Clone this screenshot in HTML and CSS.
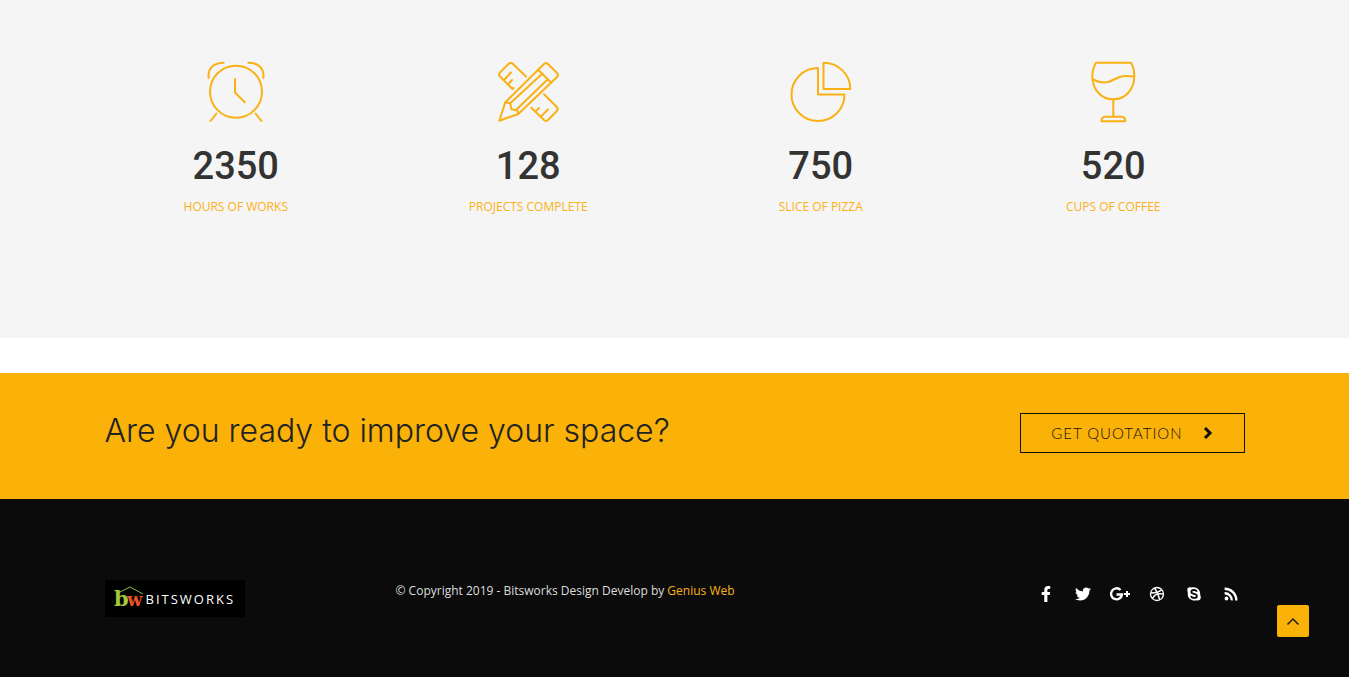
FILE: index.html
```html
<!DOCTYPE html>
<html lang="en">
<head>
    <meta charset="utf-8">
    <meta name="viewport" content="width=device-width, initial-scale=1.0">
    <title>Bitsworks</title>
    <link rel="stylesheet" href="styles.css">
</head>
<body>
    <section class="facts">
        <div class="container facts-row">
            <div class="fact">
                <svg class="fact-icon" viewBox="0 0 64 64" aria-hidden="true">
                    <circle cx="32" cy="31.7" r="26"/>
                    <path d="M31 19v13.5l9.7 9.7M4.7 18C3.5 9 9 2.7 19.7 2.7M59.3 18C60.5 9 55 2.7 44.3 2.7M12.5 53.5l-6 7.5M51.5 53.5l6 7.5"/>
                </svg>
                <div class="fact-number">2350</div>
                <div class="fact-label">HOURS OF WORKS</div>
            </div>
            <div class="fact">
                <svg class="fact-icon" viewBox="0 0 64 64" aria-hidden="true">
                    <path d="M16.5 29L4 16.5Q2.2 14.5 4 12.5L12.5 4Q14.5 2 16.5 3.5L30 16.5M8.5 19.5l6.5-7M13 23.5l3-3.5M16.5 29l1-1"/>
                    <path d="M48 34.3L60.8 47Q62.5 49 60.8 51L52 60Q50 61.7 48 60L35.3 47.7M39.5 51.5l3.5-3.5M45 56.5l7-7"/>
                    <path d="M3.3 60.7L9.3 42.3L47.5 4.5Q49.7 2 52 4L61 13Q63 15 61 17L22.3 54z"/>
                    <path d="M42.3 10L55 22.5M9.3 42.3l5 1 1 6 6 1 1 3.7M14.5 43L46.5 13.5M20.5 49.5L51.5 19.5"/>
                </svg>
                <div class="fact-number">128</div>
                <div class="fact-label">PROJECTS COMPLETE</div>
            </div>
            <div class="fact">
                <svg class="fact-icon" viewBox="0 0 64 64" aria-hidden="true">
                    <path d="M29 8v26.5h26.5A26.5 26.5 0 1 1 29 8z"/>
                    <path d="M34.5 2.7V29h26.8A26.8 26.3 0 0 0 34.5 2.7z"/>
                </svg>
                <div class="fact-number">750</div>
                <div class="fact-label">SLICE OF PIZZA</div>
            </div>
            <div class="fact">
                <svg class="fact-icon" viewBox="0 0 64 64" aria-hidden="true">
                    <path d="M15 2.7H50C52.5 7 53.3 11 53.3 16C53.3 29 45 39.3 32.3 39.3S11.3 29 11.3 16C11.3 11 12.5 7 15 2.7z"/>
                    <path d="M12 19.5C17 22 22 23 27 22C34 20 37 16 44 16C47 16 50 16 53 16.5M32.3 39.3V56.7M24 56.7H41Q44.3 57 44.3 61.3H20.5Q20.5 57 24 56.7z"/>
                </svg>
                <div class="fact-number">520</div>
                <div class="fact-label">CUPS OF COFFEE</div>
            </div>
        </div>
    </section>

    <section class="cta">
        <div class="container cta-row">
            <h2 class="cta-title">Are you ready to improve your space?</h2>
            <button type="button" class="cta-button">
                GET QUOTATION
                <svg class="cta-arrow" viewBox="0 0 10 14" aria-hidden="true"><path d="M2 2l5 5-5 5"/></svg>
            </button>
        </div>
    </section>

    <footer class="footer">
        <div class="container footer-row">
            <div class="footer-brand">
                <a href="#" class="logo">
                    <svg class="logo-mark" viewBox="0 0 30 26" aria-hidden="true">
                        <path class="roof" d="M4 7L16 1l13 7"/>
                        <text class="logo-b" x="0" y="20">b</text>
                        <text class="logo-w" x="13" y="20">w</text>
                    </svg>
                    <span class="logo-name">BITSWORKS</span>
                </a>
            </div>
            <p class="copyright">© Copyright 2019 - Bitsworks Design Develop by <a href="#">Genius Web</a></p>
            <nav class="social">
                <a href="#" aria-label="Facebook">
                    <svg viewBox="-96 0 512 512"><path d="M279.14 288l14.22-92.66h-88.91v-60.13c0-25.35 12.42-50.06 52.24-50.06h40.42V6.26S260.43 0 225.36 0c-73.22 0-121.08 44.38-121.08 124.72v70.62H22.89V288h81.39v224h100.17V288z"/></svg>
                </a>
                <a href="#" aria-label="Twitter">
                    <svg viewBox="0 0 512 512"><path d="M459.37 151.716c.325 4.548.325 9.097.325 13.645 0 138.72-105.583 298.558-298.558 298.558-59.452 0-114.68-17.219-161.137-47.106 8.447.974 16.568 1.299 25.34 1.299 49.055 0 94.213-16.568 130.274-44.832-46.132-.975-84.792-31.188-98.112-72.772 6.498.974 12.995 1.624 19.818 1.624 9.421 0 18.843-1.3 27.614-3.573-48.081-9.747-84.143-51.98-84.143-102.985v-1.299c13.969 7.797 30.214 12.67 47.431 13.319-28.264-18.843-46.781-51.005-46.781-87.391 0-19.492 5.197-37.36 14.294-52.954 51.655 63.675 129.3 105.258 216.365 109.807-1.624-7.797-2.599-15.918-2.599-24.04 0-57.828 46.782-104.934 104.934-104.934 30.213 0 57.502 12.67 76.67 33.137 23.715-4.548 46.456-13.32 66.599-25.34-7.798 24.366-24.366 44.833-46.132 57.827 21.117-2.273 41.584-8.122 60.426-16.243-14.292 20.791-32.161 39.308-52.628 54.253z"/></svg>
                </a>
                <a href="#" aria-label="Google Plus">
                    <svg class="wide" viewBox="0 0 22 16"><path class="line" d="M11.5 4A5.5 5.5 0 1 0 13 8.5H7.5"/><path d="M17 5h2v2h2v2h-2v2h-2V9h-2V7h2z"/></svg>
                </a>
                <a href="#" aria-label="Dribbble">
                    <svg viewBox="0 0 16 16"><path class="thin" d="M8 1.5a6.5 6.5 0 1 0 0 13a6.5 6.5 0 1 0 0-13zM5.5 2C8.5 6 10 10 10.5 14M1.7 7C6.5 7 10.5 6 12.5 3.5M3.5 12.5C5.5 8.5 9.5 7 14.5 8.2"/></svg>
                </a>
                <a href="#" aria-label="Skype">
                    <svg viewBox="0 0 16 16"><path d="M1.5 4.8C.5 2.5 3 .3 5.5 1.5C10.5.3 14.8 4 14.2 9C15.8 11.8 14 15.3 10.8 14.3C5.5 15.5 1.2 12 1.8 7.5z"/><path class="cut" d="M10.8 5.7C10 3.3 5.3 3.5 5.3 5.9C5.3 8.5 10.9 7.2 10.9 9.9C10.9 12.6 5.7 12.5 5 10"/></svg>
                </a>
                <a href="#" aria-label="RSS">
                    <svg viewBox="0 0 16 16"><circle cx="3.5" cy="12.5" r="1.9"/><path class="line" d="M1.6 7.2A7 7 0 0 1 8.8 14.4M1.6 2.7A11.5 11.5 0 0 1 13.3 14.4"/></svg>
                </a>
            </nav>
        </div>
    </footer>

    <button type="button" class="to-top" aria-label="Back to top">
        <svg viewBox="0 0 14 10" aria-hidden="true"><path d="M1.5 8.5L7 3l5.500 5.500"/></svg>
    </button>
</body>
</html>
```

FILE: styles.css
```css
* {
    box-sizing: border-box;
}
body {
    margin: 0;
    background: #fff;
    color: #333;
    font-family: "Open Sans", sans-serif;
    font-size: 12px;
}
.container {
    max-width: 1140px;
    margin: 0 auto;
}

/* counters */
.facts {
    padding: 60px 0 120px;
    margin-bottom: 35px;
    background: #f5f5f5;
}
.facts-row {
    display: grid;
    grid-template-columns: repeat(4, 1fr);
    column-gap: 30px;
}
.fact {
    text-align: center;
}
.fact-icon {
    display: block;
    width: 64px;
    height: 64px;
    margin: 0 auto 18px;
    fill: none;
    stroke: #f9b115;
    stroke-width: 2;
    stroke-linecap: round;
    stroke-linejoin: round;
}
.fact-number {
    font-family: Roboto, sans-serif;
    font-size: 38px;
    font-weight: 500;
    line-height: 48px;
    margin-bottom: 6px;
}
.fact-label {
    color: #fbb117;
    font-weight: 500;
    line-height: 22px;
}

/* call to action */
.cta {
    padding: 40px 0 46px;
    background: #fbb208;
}
.cta-row {
    display: flex;
    justify-content: space-between;
    align-items: flex-start;
}
.cta-title {
    margin: 0;
    color: #222;
    font-family: Inter, sans-serif;
    font-size: 32px;
    font-weight: 300;
    line-height: 36px;
}
.cta-button {
    display: flex;
    align-items: center;
    gap: 20px;
    height: 40px;
    padding: 0 31px 0 30px;
    border: 1px solid #111;
    background: none;
    color: #111;
    font-family: Lato, sans-serif;
    font-size: 15px;
    font-weight: 300;
    letter-spacing: 1px;
    cursor: pointer;
}
.cta-arrow {
    width: 10px;
    height: 14px;
    fill: none;
    stroke: #111;
    stroke-width: 3;
}

/* footer */
.footer {
    padding: 81px 0 60px;
    background: #0b0b0b;
}
.footer-row {
    display: grid;
    grid-template-columns: 1fr 2fr 1fr;
}
.logo {
    display: inline-flex;
    align-items: center;
    width: 140px;
    height: 37px;
    padding-left: 9px;
    gap: 2px;
    background: #000;
    color: #fff;
    text-decoration: none;
}
.logo-mark {
    width: 30px;
    height: 26px;
    font-family: "DejaVu Serif", serif;
    font-weight: bold;
}
.roof {
    fill: none;
    stroke: #8cc04b;
}
.logo-b {
    fill: #a2c93a;
    font-size: 21px;
}
.logo-w {
    fill: #e8542a;
    font-size: 18px;
}
.logo-name {
    font-size: 13px;
    letter-spacing: 2px;
}
.copyright {
    margin: 0;
    padding-left: 6px;
    color: #ddd;
    line-height: 21px;
}
.copyright a {
    color: #fbb117;
    text-decoration: none;
}
.social {
    display: flex;
    justify-content: flex-end;
    align-items: flex-start;
    gap: 15px;
    padding-top: 6px;
    padding-right: 3px;
}
.social a {
    display: flex;
    justify-content: center;
    width: 22px;
}
.social svg {
    width: 16px;
    height: 16px;
    fill: #fff;
}
.social .wide {
    width: 22px;
}
.social .line,
.social .thin,
.social .cut {
    fill: none;
    stroke: #fff;
    stroke-width: 2.4;
}
.social .thin {
    stroke-width: 1.3;
}
.social .cut {
    stroke: #0b0b0b;
    stroke-width: 1.8;
}

.to-top {
    position: fixed;
    right: 40px;
    bottom: 40px;
    display: flex;
    align-items: center;
    justify-content: center;
    width: 32px;
    height: 32px;
    padding: 0;
    border: 0;
    border-radius: 2px;
    background: #fbb208;
    cursor: pointer;
}
.to-top svg {
    width: 14px;
    height: 10px;
    fill: none;
    stroke: #222;
    stroke-width: 1.5;
}
```
